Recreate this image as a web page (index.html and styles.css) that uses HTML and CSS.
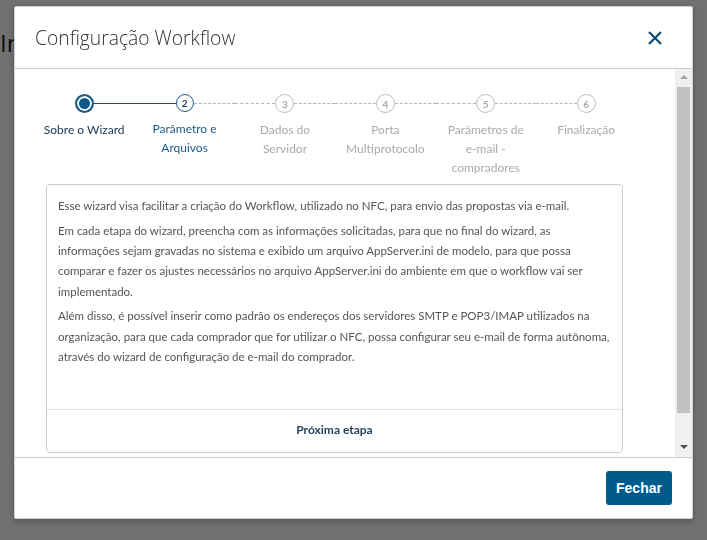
FILE: index.html
```html
<!DOCTYPE html>
<html lang="pt-BR">
<head>
    <meta charset="UTF-8">
    <title>Configuração Workflow</title>
    <link rel="stylesheet" href="styles.css">
</head>
<body>
    <div class="page">
        <h1 class="page-title">Integração</h1>
    </div>

    <div class="backdrop">
        <div class="modal">
            <div class="modal-header">
                <h2>Configuração Workflow</h2>
                <button class="close" aria-label="Fechar">
                    <svg width="16" height="16" viewBox="0 0 16 16">
                        <path d="M2 2 L14 14 M14 2 L2 14" stroke="#0c4a78" stroke-width="2.2" fill="none"/>
                    </svg>
                </button>
            </div>

            <div class="modal-body">
                <div class="body-content">
                    <div class="stepper">
                        <div class="step done">
                            <div class="track">
                                <span class="line hidden"></span>
                                <span class="dot"></span>
                                <span class="line solid"></span>
                            </div>
                            <div class="label">Sobre o Wizard</div>
                        </div>
                        <div class="step current">
                            <div class="track">
                                <span class="line solid"></span>
                                <span class="dot">2</span>
                                <span class="line"></span>
                            </div>
                            <div class="label">Parâmetro e Arquivos</div>
                        </div>
                        <div class="step">
                            <div class="track">
                                <span class="line"></span>
                                <span class="dot">3</span>
                                <span class="line"></span>
                            </div>
                            <div class="label">Dados do Servidor</div>
                        </div>
                        <div class="step">
                            <div class="track">
                                <span class="line"></span>
                                <span class="dot">4</span>
                                <span class="line"></span>
                            </div>
                            <div class="label">Porta Multiprotocolo</div>
                        </div>
                        <div class="step">
                            <div class="track">
                                <span class="line"></span>
                                <span class="dot">5</span>
                                <span class="line"></span>
                            </div>
                            <div class="label">Parâmetros de e-mail - compradores</div>
                        </div>
                        <div class="step">
                            <div class="track">
                                <span class="line"></span>
                                <span class="dot">6</span>
                                <span class="line hidden"></span>
                            </div>
                            <div class="label">Finalização</div>
                        </div>
                    </div>

                    <div class="card">
                        <div class="card-text">
                            <p>Esse wizard visa facilitar a criação do Workflow, utilizado no NFC, para envio das propostas via e-mail.</p>
                            <p>Em cada etapa do wizard, preencha com as informações solicitadas, para que no final do wizard, as informações sejam gravadas no sistema e exibido um arquivo AppServer.ini de modelo, para que possa comparar e fazer os ajustes necessários no arquivo AppServer.ini do ambiente em que o workflow vai ser implementado.</p>
                            <p>Além disso, é possível inserir como padrão os endereços dos servidores SMTP e POP3/IMAP utilizados na organização, para que cada comprador que for utilizar o NFC, possa configurar seu e-mail de forma autônoma, através do wizard de configuração de e-mail do comprador.</p>
                        </div>
                        <div class="card-footer">
                            <a href="#" class="next">Próxima etapa</a>
                        </div>
                    </div>
                </div>

                <div class="scrollbar">
                    <span class="arrow up"></span>
                    <span class="thumb"></span>
                    <span class="arrow down"></span>
                </div>
            </div>

            <div class="modal-footer">
                <button class="btn">Fechar</button>
            </div>
        </div>
    </div>
</body>
</html>
```

FILE: styles.css
```css
/* Page behind the dialog */
body {
    margin: 0;
    font-family: Lato, "Open Sans", sans-serif;
    background-color: #fff;
}

.page {
    width: 14px;
    overflow: hidden;
    padding-top: 26px;
}

.page-title {
    margin: 0;
    font-family: "Open Sans", sans-serif;
    font-weight: 400;
    font-size: 24px;
    color: #222;
    white-space: nowrap;
}

/* Dialog overlay */
.backdrop {
    position: fixed;
    inset: 0;
    background-color: rgba(0, 0, 0, 0.56);
}

.modal {
    position: absolute;
    left: 14px;
    top: 6px;
    width: 677px;
    height: 511px;
    display: flex;
    flex-direction: column;
    background-color: #fff;
    border: 1px solid #d0d0d0;
    border-radius: 2px;
    box-shadow: 0 2px 6px rgba(0, 0, 0, 0.25);
}

.modal-header {
    height: 61px;
    display: flex;
    align-items: center;
    justify-content: space-between;
    padding: 0 29px 0 20px;
    border-bottom: 1px solid #ccc;
}

.modal-header h2 {
    margin: 0;
    font-family: "Open Sans", sans-serif;
    font-weight: 300;
    font-size: 19.3px;
    color: #333;
}

.close {
    border: none;
    background: none;
    padding: 0;
    cursor: pointer;
    display: flex;
}

.modal-body {
    height: 388px;
    display: flex;
    overflow: hidden;
}

.body-content {
    flex: 1;
    padding: 25px 0 0 19px;
}

/* Stepper */
.stepper {
    display: flex;
}

.step {
    width: 100.4px;
    display: flex;
    flex-direction: column;
    align-items: center;
}

.track {
    width: 100%;
    display: flex;
    align-items: center;
}

.line {
    flex: 1;
    border-top: 1px dashed #b5b5b5;
}

.line.solid {
    border-top: 1px solid #2f4a5f;
}

.line.hidden {
    border-top-color: transparent;
}

.dot {
    width: 17px;
    height: 17px;
    border-radius: 50%;
    border: 1px solid #bdbdbd;
    display: flex;
    align-items: center;
    justify-content: center;
    font-size: 10px;
    font-weight: 700;
    color: #aaa;
}

.step.done .dot {
    width: 15px;
    height: 15px;
    border: 2px solid #1a5a8a;
    background-color: #0c568a;
    box-shadow: inset 0 0 0 2px #fff;
}

.step.current .dot {
    width: 16px;
    height: 16px;
    border: 1.5px solid #1a5a8a;
    color: #1f3f5c;
}

.label {
    width: 88px;
    margin-top: 7px;
    text-align: center;
    font-size: 12px;
    line-height: 19px;
    color: #aaa;
}

.step.done .label {
    color: #163553;
}

.step.current .label {
    color: #1a5a8a;
}

/* Content card */
.card {
    width: 575px;
    margin: 7px 0 0 12px;
    border: 1px solid #ccc;
    border-radius: 4px;
}

.card-text {
    height: 213px;
    padding: 11px 10px 0 11px;
    border-bottom: 1px solid #e0e0e0;
}

.card-text p {
    margin: 0 0 4.5px 0;
    font-size: 11.5px;
    line-height: 20.3px;
    color: #555;
}

.card-footer {
    height: 38px;
    padding-bottom: 4px;
    display: flex;
    align-items: center;
    justify-content: center;
}

.next {
    font-size: 12px;
    font-weight: 700;
    color: #1f3f5c;
    text-decoration: none;
}

/* Fake scrollbar */
.scrollbar {
    width: 17px;
    display: flex;
    flex-direction: column;
    align-items: center;
    background-color: #f0f0f0;
}

.arrow {
    width: 0;
    height: 0;
    border-left: 4px solid transparent;
    border-right: 4px solid transparent;
}

.arrow.up {
    margin: 6px 0 8px 0;
    border-bottom: 4px solid #a3a3a3;
}

.arrow.down {
    margin: 32px 0 0 0;
    border-top: 4px solid #505050;
}

.thumb {
    width: 13px;
    height: 326px;
    background-color: #c1c1c1;
}

/* Footer */
.modal-footer {
    flex: 1;
    display: flex;
    align-items: center;
    justify-content: flex-end;
    padding: 0 20px;
    border-top: 1px solid #ccc;
}

.btn {
    width: 66px;
    height: 34px;
    border: none;
    border-radius: 3px;
    background-color: #005a8c;
    color: #fff;
    font-family: "Liberation Sans", Arial, sans-serif;
    font-weight: 700;
    font-size: 14px;
    cursor: pointer;
}
```
